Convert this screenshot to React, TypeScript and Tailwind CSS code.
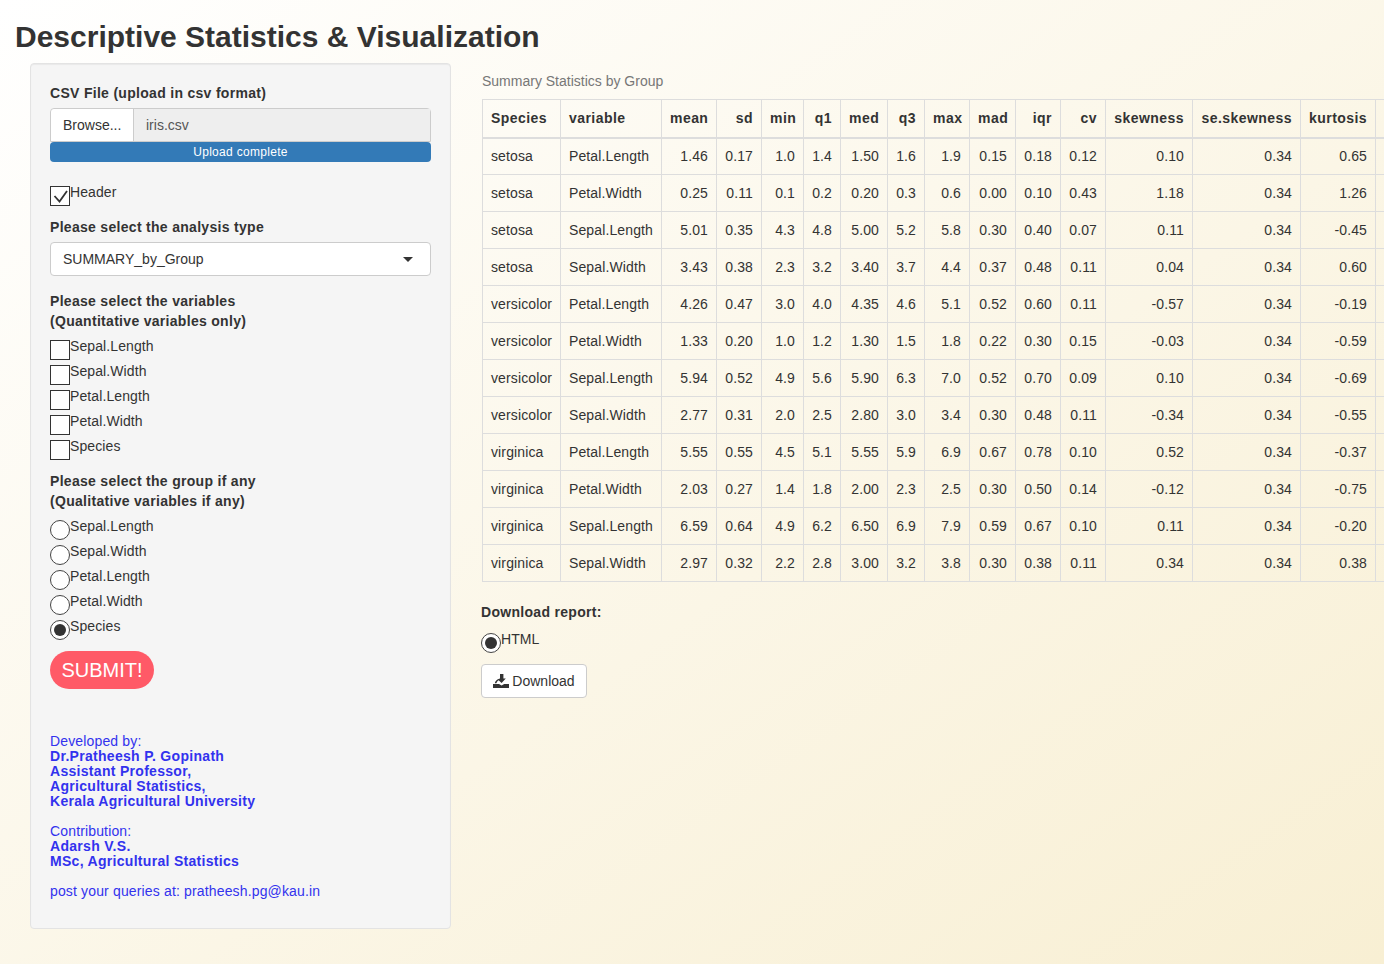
import React from 'react';

const font = { fontFamily: '"Liberation Sans", Arial, sans-serif' };

const columns = ['Species', 'variable', 'mean', 'sd', 'min', 'q1', 'med', 'q3', 'max', 'mad', 'iqr', 'cv', 'skewness', 'se.skewness', 'kurtosis', ''];
const widths = [78, 101, 55, 45, 42, 37, 47, 37, 45, 46, 45, 45, 87, 108, 75, 80];

const rows = [
  ['setosa', 'Petal.Length', '1.46', '0.17', '1.0', '1.4', '1.50', '1.6', '1.9', '0.15', '0.18', '0.12', '0.10', '0.34', '0.65'],
  ['setosa', 'Petal.Width', '0.25', '0.11', '0.1', '0.2', '0.20', '0.3', '0.6', '0.00', '0.10', '0.43', '1.18', '0.34', '1.26'],
  ['setosa', 'Sepal.Length', '5.01', '0.35', '4.3', '4.8', '5.00', '5.2', '5.8', '0.30', '0.40', '0.07', '0.11', '0.34', '-0.45'],
  ['setosa', 'Sepal.Width', '3.43', '0.38', '2.3', '3.2', '3.40', '3.7', '4.4', '0.37', '0.48', '0.11', '0.04', '0.34', '0.60'],
  ['versicolor', 'Petal.Length', '4.26', '0.47', '3.0', '4.0', '4.35', '4.6', '5.1', '0.52', '0.60', '0.11', '-0.57', '0.34', '-0.19'],
  ['versicolor', 'Petal.Width', '1.33', '0.20', '1.0', '1.2', '1.30', '1.5', '1.8', '0.22', '0.30', '0.15', '-0.03', '0.34', '-0.59'],
  ['versicolor', 'Sepal.Length', '5.94', '0.52', '4.9', '5.6', '5.90', '6.3', '7.0', '0.52', '0.70', '0.09', '0.10', '0.34', '-0.69'],
  ['versicolor', 'Sepal.Width', '2.77', '0.31', '2.0', '2.5', '2.80', '3.0', '3.4', '0.30', '0.48', '0.11', '-0.34', '0.34', '-0.55'],
  ['virginica', 'Petal.Length', '5.55', '0.55', '4.5', '5.1', '5.55', '5.9', '6.9', '0.67', '0.78', '0.10', '0.52', '0.34', '-0.37'],
  ['virginica', 'Petal.Width', '2.03', '0.27', '1.4', '1.8', '2.00', '2.3', '2.5', '0.30', '0.50', '0.14', '-0.12', '0.34', '-0.75'],
  ['virginica', 'Sepal.Length', '6.59', '0.64', '4.9', '6.2', '6.50', '6.9', '7.9', '0.59', '0.67', '0.10', '0.11', '0.34', '-0.20'],
  ['virginica', 'Sepal.Width', '2.97', '0.32', '2.2', '2.8', '3.00', '3.2', '3.8', '0.30', '0.38', '0.11', '0.34', '0.34', '0.38'],
];

const variables = ['Sepal.Length', 'Sepal.Width', 'Petal.Length', 'Petal.Width', 'Species'];

const Checkbox: React.FC<{ label: string; checked?: boolean }> = ({ label, checked }) => (
  <div className="flex h-[25px] items-start">
    <span className="mt-[5px] flex h-5 w-5 shrink-0 items-center justify-center border border-[#333] bg-white">
      {checked && (
        <svg viewBox="1 1 18 18" className="h-[18px] w-[18px]" fill="none" stroke="#333" strokeWidth="1.8">
          <path d="M4.500 10 L9.500 15.500 L17 5" />
        </svg>
      )}
    </span>
    <span className="pt-px leading-5 tracking-[0.1px]">{label}</span>
  </div>
);

const Radio: React.FC<{ label: string; checked?: boolean }> = ({ label, checked }) => (
  <div className="flex h-[25px] items-start">
    <span className="mt-[5px] flex h-5 w-5 shrink-0 items-center justify-center rounded-full border border-[#444] bg-white">
      {checked && <span className="h-3 w-3 rounded-full bg-[#333]" />}
    </span>
    <span className="pt-px leading-5 tracking-[0.1px]">{label}</span>
  </div>
);

const DownloadIcon = () => (
  <svg viewBox="0 0 16 14" className="h-[14px] w-4" fill="#333">
    <path d="M7 0h3.400v4.600h2.400L8.600 9 5.600 6.200C4.400 7 3.800 8 3.400 9.200H1.800C2.200 7 3.600 5.200 7 4.400z" />
    <path d="M0 10h6l2.600 1.600L11.200 10H16v4H0z" />
  </svg>
);

export default function App() {
  return (
    <div
      style={font}
      className="h-[964px] w-[1384px] overflow-hidden bg-gradient-to-br from-white to-[#f8efd3] text-sm text-[#333]"
    >
      <h1 className="pl-[15px] pt-[19px] text-[30px] font-bold leading-[35px]">
        Descriptive Statistics &amp; Visualization
      </h1>

      <div className="mt-[9px] flex items-start pl-[30px]">
        {/* sidebar */}
        <div className="h-[866px] w-[421px] shrink-0 rounded border border-[#e3e3e3] bg-[#f5f5f5] px-[19px] pt-[19px] shadow-[inset_0_1px_1px_rgba(0,0,0,0.05)]">
          <label className="block font-bold leading-5 tracking-[0.3px]">CSV File (upload in csv format)</label>
          <div className="mt-[5px] flex h-[34px] rounded-t border border-[#ccc]">
            <span className="flex w-[83px] items-center rounded-tl border-r border-[#ccc] bg-white pl-3">Browse...</span>
            <span className="flex flex-1 items-center bg-[#eeeeee] pl-3 text-[#555]">iris.csv</span>
          </div>
          <div className="flex h-5 items-center justify-center rounded bg-[#337ab7] text-xs tracking-[0.3px] text-white">
            Upload complete
          </div>

          <div className="mt-[19px]">
            <Checkbox label="Header" checked />
          </div>

          <label className="mt-[11px] block font-bold leading-5 tracking-[0.3px]">Please select the analysis type</label>
          <div className="relative mt-[5px] flex h-[34px] items-center rounded border border-[#ccc] bg-white pl-3">
            SUMMARY_by_Group
            <span className="absolute right-[17px] top-[14px] h-0 w-0 border-x-[5px] border-t-[5px] border-x-transparent border-t-[#333]" />
          </div>

          <div className="mt-[15px] font-bold leading-5 tracking-[0.3px]">
            Please select the variables
            <br />
            (Quantitative variables only)
          </div>
          <div className="mt-[4px]">
            {variables.map((v) => (
              <Checkbox key={v} label={v} />
            ))}
          </div>

          <div className="mt-[11px] font-bold leading-5 tracking-[0.3px]">
            Please select the group if any
            <br />
            (Qualitative variables if any)
          </div>
          <div className="mt-[4px]">
            {variables.map((v) => (
              <Radio key={v} label={v} checked={v === 'Species'} />
            ))}
          </div>

          <button className="mt-[11px] h-[38px] w-[104px] rounded-full bg-[#ff5a67] text-xl text-white">SUBMIT!</button>

          <div className="mt-[45px] leading-[15px] tracking-[0.15px] text-[#3232ee]">
            <div>Developed by:</div>
            <div className="font-bold tracking-[0.3px]">
              Dr.Pratheesh P. Gopinath
              <br />
              Assistant Professor,
              <br />
              Agricultural Statistics,
              <br />
              Kerala Agricultural University
            </div>
            <div className="mt-[15px]">Contribution:</div>
            <div className="font-bold tracking-[0.3px]">
              Adarsh V.S.
              <br />
              MSc, Agricultural Statistics
            </div>
            <div className="mt-[15px]">post your queries at: pratheesh.pg@kau.in</div>
          </div>
        </div>

        {/* results */}
        <div className="ml-[31px] min-w-0">
          <div className="pt-[8px] leading-5 text-[#777]">Summary Statistics by Group</div>
          <table className="mt-[8px] table-fixed border-collapse" style={{ width: 973 }}>
            <colgroup>
              {widths.map((w, i) => (
                <col key={i} style={{ width: w }} />
              ))}
            </colgroup>
            <thead>
              <tr className="h-[38px]">
                {columns.map((c, i) => (
                  <th
                    key={i}
                    className={`border border-b-2 border-[#dddddd] px-2 font-bold tracking-[0.45px] ${i < 2 ? 'text-left' : 'text-right'}`}
                  >
                    {c}
                  </th>
                ))}
              </tr>
            </thead>
            <tbody>
              {rows.map((r, i) => (
                <tr key={i} className="h-[37px]">
                  {r.map((v, j) => (
                    <td
                      key={j}
                      className={`border border-[#dddddd] px-2 tracking-[0.12px] ${j < 2 ? 'text-left' : 'text-right'}`}
                    >
                      {v}
                    </td>
                  ))}
                  <td className="border border-[#dddddd]" />
                </tr>
              ))}
            </tbody>
          </table>

          <div className="-ml-px mt-[20px] font-bold leading-5 tracking-[0.3px]">Download report:</div>
          <div className="-ml-px mt-[6px]">
            <Radio label="HTML" checked />
          </div>
          <button className="-ml-px mt-[11px] flex h-[34px] w-[106px] items-center justify-center gap-[3px] rounded border border-[#ccc] bg-white">
            <DownloadIcon />
            Download
          </button>
        </div>
      </div>
    </div>
  );
}
